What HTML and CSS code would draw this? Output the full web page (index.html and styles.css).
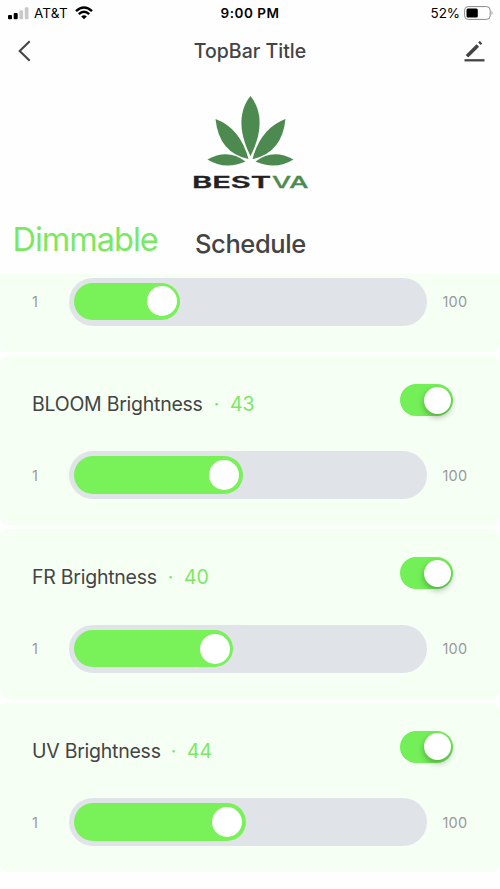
FILE: index.html
```html
<!DOCTYPE html>
<html lang="en">
<head>
<meta charset="utf-8">
<meta name="viewport" content="width=device-width, initial-scale=1">
<title>TopBar Title</title>
<link rel="stylesheet" href="styles.css">
</head>
<body>
<div class="screen">
  <div class="status">
    <div class="status-left">
      <svg class="signal" width="21" height="13" viewBox="0 0 21 13"><rect x="0" y="8" width="4" height="4.2" rx="1"/><rect x="5.7" y="6" width="4" height="6.2" rx="1"/><g fill="#c9c9c9"><rect x="11.4" y="3.3" width="3.7" height="8.9" rx="1"/><rect x="16.8" y="0.3" width="3.7" height="11.9" rx="1"/></g></svg>
      <span class="carrier">AT&amp;T</span>
      <svg class="wifi" width="18" height="14" viewBox="0 0 18 14" fill="none" stroke="#000" stroke-width="2.5"><path d="M1 5.1Q9-2.1 17 5.1"/><path d="M3.8 8.2Q9 3.4 14.2 8.2"/><path d="M9 13.2L6.2 10.5Q9 8.2 11.8 10.5Z" fill="#000" stroke="none"/></svg>
    </div>
    <span class="clock">9:00 PM</span>
    <div class="status-right">
      <span class="percent">52%</span>
      <svg width="30" height="14" viewBox="0 0 30 14"><rect x=".6" y=".6" width="25.6" height="12.8" rx="3.6" fill="none" stroke="#8a8a8a" stroke-width="1"/><rect x="2.5" y="2.5" width="11.3" height="9" rx="1.5"/><path d="M27.6 4.8Q29.5 7 27.6 9.2Z" fill="#8a8a8a"/></svg>
    </div>
  </div>
  <header class="topbar">
    <svg width="13" height="22" viewBox="0 0 13 22" fill="none" stroke="#444" stroke-width="2.1"><path d="M11.7 1.2L1.7 11L11.7 20.8"/></svg>
    <h1 class="title">TopBar Title</h1>
    <svg width="21" height="21" viewBox="0 0 21 21" fill="none" stroke="#444"><path d="M3 15.200L13.800 4.400" stroke-width="3.600"/><path d="M15.400 2.800L17 1.200" stroke-width="3.600"/><path d="M.5 19.3H20.500" stroke-width="2.300"/></svg>
  </header>
  <svg class="logo" width="118" height="98" viewBox="0 0 118 98">
    <g fill="#4d8a50">
      <path d="M58.5 1C68 13 73 32 58.5 61C44 32 49 13 58.5 1Z"/>
      <path d="M23.5 24Q48 33 56.5 64Q27 58 23.5 24Z"/>
      <path d="M93.5 24Q69 33 60.5 64Q90 58 93.5 24Z"/>
      <path d="M15.5 64.5Q36 53 53.5 66.5Q33 75.500 15.500 64.500Z"/>
      <path d="M101.500 64.500Q81 53 63.500 66.500Q84 75.500 101.500 64.500Z"/>
    </g>
    <text class="wordmark" transform="translate(0 93) scale(1.55 1)" textLength="51" lengthAdjust="spacingAndGlyphs">BEST</text>
    <text class="wordmark wordmark-va" transform="translate(80 93) scale(1.55 1)" textLength="23.500" lengthAdjust="spacingAndGlyphs">VA</text>
  </svg>
  <nav class="tabs">
    <span class="tab tab-active">Dimmable</span>
    <span class="tab tab-schedule">Schedule</span>
  </nav>
  <main class="panels">
    <section class="card card-clipped">
      <div class="range"><span class="min">1</span><div class="track"><div class="fill" style="width:106px"><i class="thumb"></i></div></div><span class="max">100</span></div>
    </section>
    <section class="card">
      <div class="heading"><span class="name bloom">BLOOM Brightness</span><span class="dot">·</span><span class="value">43</span><div class="switch"><i class="knob"></i></div></div>
      <div class="range"><span class="min">1</span><div class="track"><div class="fill" style="width:168.500px"><i class="thumb"></i></div></div><span class="max">100</span></div>
    </section>
    <section class="card">
      <div class="heading"><span class="name fr">FR Brightness</span><span class="dot">·</span><span class="value">40</span><div class="switch"><i class="knob"></i></div></div>
      <div class="range"><span class="min">1</span><div class="track"><div class="fill" style="width:159px"><i class="thumb"></i></div></div><span class="max">100</span></div>
    </section>
    <section class="card">
      <div class="heading"><span class="name uv">UV Brightness</span><span class="dot">·</span><span class="value">44</span><div class="switch"><i class="knob"></i></div></div>
      <div class="range"><span class="min">1</span><div class="track"><div class="fill" style="width:171.500px"><i class="thumb"></i></div></div><span class="max">100</span></div>
    </section>
  </main>
</div>
</body>
</html>
```
FILE: styles.css
```css
* { box-sizing: border-box; }
body { margin: 0; background: #fefefe; font-family: Inter, "Liberation Sans", sans-serif; color: #444; }
svg { display: block; flex: none; }
.screen { width: 500px; height: 889px; overflow: hidden; }
.status { display: grid; grid-template-columns: 1fr auto 1fr; align-items: center; height: 26px; padding: 0 6px 0 8px; color: #000; font-size: 13.500px; }
.status-left, .status-right { display: flex; align-items: center; }
.status-right { justify-content: flex-end; gap: 4px; }
.carrier { margin-left: 5px; width: 35px; white-space: nowrap; letter-spacing: .2px; }
.wifi { margin-left: 6px; }
.clock { margin-right: 2px; font-size: 13.500px; font-weight: 600; letter-spacing: .5px; }
.percent { letter-spacing: -.1px; }
.topbar { display: flex; align-items: center; justify-content: space-between; height: 50px; padding: 0 14.500px 0 18px; }
.title { margin: 0 0 0 4.500px; font-size: 19.500px; font-weight: 500; letter-spacing: 0; }
.logo { margin: 19px 0 0 192px; }
.wordmark { font-family: Inter, sans-serif; font-weight: 600; font-size: 16px; fill: #222; stroke: #222; stroke-width: .3; }
.wordmark-va { font-weight: 500; fill: #4d8a50; stroke: #4d8a50; }
.tabs { display: flex; align-items: center; height: 80.500px; padding-left: 12.500px; }
.tab-active { width: 182.500px; color: #7be863; font-size: 32.500px; line-height: 40px; letter-spacing: -1px; margin-top: 14px; }
.tab-schedule { font-size: 25.500px; font-weight: 500; line-height: 32px; letter-spacing: -.4px; margin-top: 22px; }
.panels { display: flex; flex-direction: column; gap: 4px; }
.card { height: 169.400px; padding: 28px 0 0; border-radius: 8px; background: #f5fff4; }
.card-clipped { height: 78.500px; padding-top: 4px; border-radius: 0 0 8px 8px; }
.heading { display: flex; height: 67.400px; padding: 0 47px 0 32px; font-size: 19.500px; line-height: 40px; white-space: nowrap; }
.bloom { width: 171px; }
.fr { width: 125px; }
.uv { width: 128px; }
.name { letter-spacing: -.25px; }
.dot { width: 27px; text-align: center; color: #7be863; }
.value { color: #7be863; }
.switch { width: 53.500px; height: 32px; margin-left: auto; padding: 2.500px 2px; border-radius: 16px; background: #73ef58; }
.knob { display: block; width: 27px; height: 27px; margin-left: auto; border-radius: 50%; background: #fff; box-shadow: 0 3px 6px rgba(0,0,0,.3); }
.range { display: flex; align-items: center; padding-left: 32px; font-size: 14.500px; color: #999; }
.min { width: 37px; }
.track { width: 357.500px; height: 48px; padding: 5px; border-radius: 24px; background: #e0e4e9; }
.fill { display: flex; align-items: center; justify-content: flex-end; height: 37.500px; padding-right: 3.500px; border-radius: 19px; background: #79f159; }
.thumb { width: 30px; height: 30px; border-radius: 50%; background: #fff; }
.max { margin-left: 16px; letter-spacing: .2px; }
```
